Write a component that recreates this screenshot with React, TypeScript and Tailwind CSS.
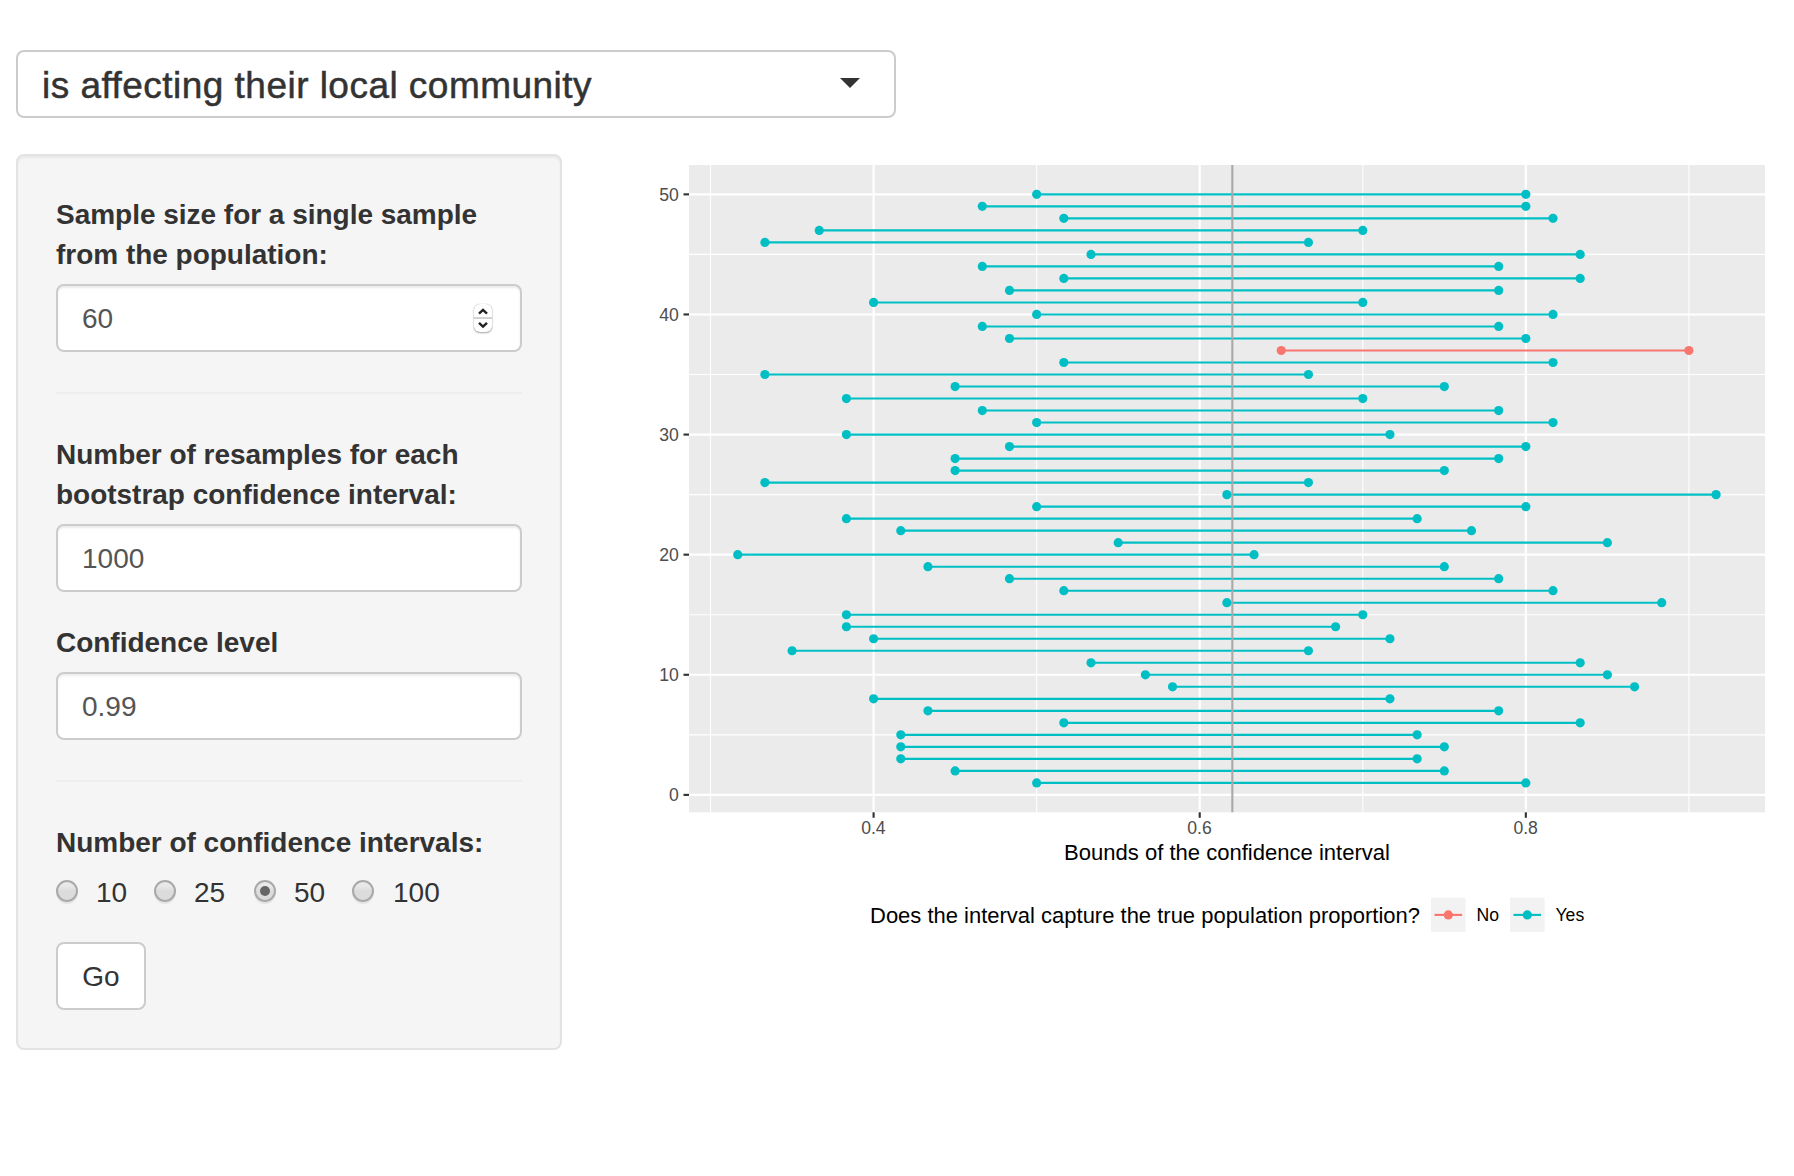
import type { ReactNode } from "react";

// Interval bounds in sixtieths, first entry is interval number 1.
const INTERVALS: [number, number][] = [
  [30, 48], [27, 45], [25, 44], [25, 45], [25, 44], [31, 50], [26, 47], [24, 43], [35, 52], [34, 51],
  [32, 50], [21, 40], [24, 43], [23, 41], [23, 42], [37, 53], [31, 49], [29, 47], [26, 45], [19, 38],
  [33, 51], [25, 46], [23, 44], [30, 48], [37, 55], [20, 40], [27, 45], [27, 47], [29, 48], [23, 43],
  [30, 49], [28, 47], [23, 42], [27, 45], [20, 40], [31, 49], [39, 54], [29, 48], [28, 47], [30, 49],
  [24, 42], [29, 47], [31, 50], [28, 47], [32, 50], [20, 40], [22, 42], [31, 49], [28, 48], [30, 48],
];

const TRUE_PROPORTION = 0.62;
const YES = "#00BFC4";
const NO = "#F8766D";
const PANEL = { left: 49, top: 11, right: 1125, bottom: 658.3 };

const sx = (v: number) => 233.6 + (v - 0.4) * 1630.6;
const sy = (n: number) => 640.9 - n * 12.011;

function Chart() {
  return (
    <svg
      width="1138"
      height="800"
      viewBox="0 0 1138 800"
      className="block shrink-0"
      fontFamily='"Liberation Sans", Arial, sans-serif'
    >
      <rect x={PANEL.left} y={PANEL.top} width={PANEL.right - PANEL.left} height={PANEL.bottom - PANEL.top} fill="#EBEBEB" />
      <g stroke="#fff" strokeWidth="1.07">
        {[5, 15, 25, 35, 45].map((n) => (
          <line key={n} x1={PANEL.left} x2={PANEL.right} y1={sy(n)} y2={sy(n)} />
        ))}
        {[0.3, 0.5, 0.7, 0.9].map((v) => (
          <line key={v} x1={sx(v)} x2={sx(v)} y1={PANEL.top} y2={PANEL.bottom} />
        ))}
      </g>
      <g stroke="#fff" strokeWidth="2.13">
        {[0, 10, 20, 30, 40, 50].map((n) => (
          <line key={n} x1={PANEL.left} x2={PANEL.right} y1={sy(n)} y2={sy(n)} />
        ))}
        {[0.4, 0.6, 0.8].map((v) => (
          <line key={v} x1={sx(v)} x2={sx(v)} y1={PANEL.top} y2={PANEL.bottom} />
        ))}
      </g>
      {INTERVALS.map(([lo, hi], i) => {
        const a = lo / 60;
        const b = hi / 60;
        const color = a <= TRUE_PROPORTION && TRUE_PROPORTION <= b ? YES : NO;
        const y = sy(i + 1);
        return (
          <g key={i} stroke={color} fill={color}>
            <line x1={sx(a)} x2={sx(b)} y1={y} y2={y} strokeWidth="2.13" />
            <circle cx={sx(a)} cy={y} r="4.6" stroke="none" />
            <circle cx={sx(b)} cy={y} r="4.6" stroke="none" />
          </g>
        );
      })}
      <line x1={sx(TRUE_PROPORTION)} x2={sx(TRUE_PROPORTION)} y1={PANEL.top} y2={PANEL.bottom} stroke="#A9A9A9" strokeWidth="2.13" />

      <g stroke="#333" strokeWidth="2.13">
        {[0, 10, 20, 30, 40, 50].map((n) => (
          <line key={n} x1={PANEL.left - 5.5} x2={PANEL.left} y1={sy(n)} y2={sy(n)} />
        ))}
        {[0.4, 0.6, 0.8].map((v) => (
          <line key={v} x1={sx(v)} x2={sx(v)} y1={PANEL.bottom} y2={PANEL.bottom + 5.5} />
        ))}
      </g>
      <g fill="#4D4D4D" fontSize="17.6">
        {[0, 10, 20, 30, 40, 50].map((n) => (
          <text key={n} x="38.8" y={sy(n) + 6.3} textAnchor="end">{n}</text>
        ))}
        {[0.4, 0.6, 0.8].map((v) => (
          <text key={v} x={sx(v) - 0.2} y="679.8" textAnchor="middle">{v}</text>
        ))}
      </g>
      <text x="424" y="706" fontSize="22" textLength="326" lengthAdjust="spacingAndGlyphs">Bounds of the confidence interval</text>
      <text x="230" y="769.2" fontSize="22" textLength="550" lengthAdjust="spacingAndGlyphs">
        Does the interval capture the true population proportion?
      </text>

      {[
        { label: "No", x: 791, tx: 836.5, color: NO },
        { label: "Yes", x: 870, tx: 915.5, color: YES },
      ].map((k) => (
        <g key={k.label}>
          <rect x={k.x} y="743.7" width="34.6" height="34.4" fill="#F2F2F2" />
          <line x1={k.x + 3.5} x2={k.x + 31.1} y1="760.9" y2="760.9" stroke={k.color} strokeWidth="2.13" />
          <circle cx={k.x + 17.3} cy="760.9" r="4.6" fill={k.color} />
          <text x={k.tx} y="767" fontSize="17.6">{k.label}</text>
        </g>
      ))}
    </svg>
  );
}

function Label({ children }: { children: ReactNode }) {
  return <div className="mb-[9px] pt-px font-bold tracking-[-0.02px] whitespace-nowrap">{children}</div>;
}

function Field({ value, children }: { value: string; children?: ReactNode }) {
  return (
    <div className="flex h-[68px] items-center justify-between rounded-lg border-2 border-[#ccc] bg-white pr-7 pl-6 text-[#555] shadow-[inset_0_2px_2px_rgba(0,0,0,0.075)]">
      <span className="pt-0.5">{value}</span>
      {children}
    </div>
  );
}

function Stepper() {
  return (
    <span className="flex h-7 w-[18px] flex-col rounded-md bg-white shadow-[0_1px_2px_rgba(0,0,0,0.35),0_0_1px_rgba(0,0,0,0.3)]">
      <svg viewBox="0 0 18 28" className="h-7 w-[18px]" fill="none">
        <rect x="0" y="13" width="18" height="2" fill="#d2d2d2" />
        <path d="M5 9.6 9 5.9l4 3.7M5 18.9 9 22.6l4-3.7" stroke="#222" strokeWidth="2.4" />
      </svg>
    </span>
  );
}

function Radio({ checked }: { checked?: boolean }) {
  return (
    <span className="mt-2 flex size-[22px] shrink-0 items-center justify-center rounded-full border-2 border-[#a9a9a9] bg-linear-to-b from-[#e9e9e9] from-20% to-[#dcdcdc] to-50% shadow-[0_2px_0_rgba(0,0,0,0.07)]">
      {checked && <span className="size-2.5 rounded-full bg-[#666]" />}
    </span>
  );
}

const OPTIONS = [
  { label: "10", cls: "w-[98px] gap-[18px]" },
  { label: "25", cls: "w-[100px] gap-[18px]" },
  { label: "50", cls: "w-[98px] gap-[18px]", checked: true },
  { label: "100", cls: "w-[100px] gap-[19px]" },
];

export default function App() {
  return (
    <div className="h-[1176px] w-[1794px] overflow-hidden bg-white px-4 pt-[50px] font-['Liberation_Sans',Arial,sans-serif] text-[28px] leading-10 text-[#333]">
      <div className="flex h-[68px] w-[880px] items-center justify-between rounded-lg border-2 border-[#ccc] bg-white pr-[34px] pl-6 text-[37px]">
        <span className="pt-[3px] tracking-[0.47px] [-webkit-text-stroke:0.5px_#333]">is affecting their local community</span>
        <svg viewBox="0 0 20 10" className="mb-0.5 h-2.5 w-5">
          <path d="M0 0h20L10 10z" fill="#333" />
        </svg>
      </div>

      <div className="mt-9 flex items-start gap-[78px]">
        <div className="h-[896px] w-[546px] shrink-0 rounded-lg border-2 border-[#e3e3e3] bg-[#f5f5f5] p-[38px] shadow-[inset_0_2px_2px_rgba(0,0,0,0.05)]">
          <Label>
            Sample size for a single sample
            <br />
            from the population:
          </Label>
          <Field value="60">
            <Stepper />
          </Field>
          <hr className="my-10 border-t-2 border-[#eee]" />
          <Label>
            Number of resamples for each
            <br />
            bootstrap confidence interval:
          </Label>
          <Field value="1000" />
          <div className="h-[30px]" />
          <Label>Confidence level</Label>
          <Field value="0.99" />
          <hr className="my-10 border-t-2 border-[#eee]" />
          <Label>Number of confidence intervals:</Label>
          <div className="flex">
            {OPTIONS.map((o) => (
              <label key={o.label} className={`flex h-10 ${o.cls}`}>
                <Radio checked={o.checked} />
                <span className="pt-px">{o.label}</span>
              </label>
            ))}
          </div>
          <button className="mt-[30px] block h-[68px] w-[90px] rounded-lg border-2 border-[#ccc] bg-white pt-0.5">Go</button>
        </div>
        <Chart />
      </div>
    </div>
  );
}
